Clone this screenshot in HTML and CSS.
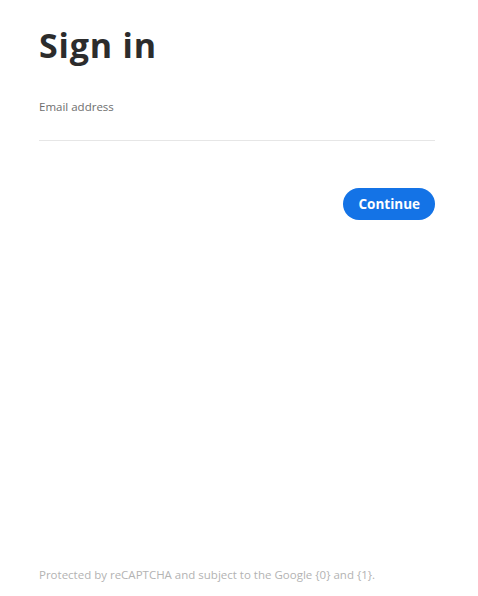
FILE: index.html
```html
<!DOCTYPE html>
<html lang="en">
<head>
<meta charset="utf-8">
<title>Sign in</title>
<link rel="stylesheet" href="styles.css">
</head>
<body>
<div class="page">
  <main class="card">
    <h1 class="title">Sign in</h1>
    <form class="form">
      <label class="field">
        <span class="label">Email address</span>
        <input class="input" type="email">
      </label>
      <div class="actions">
        <button type="button" class="btn">Continue</button>
      </div>
    </form>
  </main>
  <footer class="legal">Protected by reCAPTCHA and subject to the Google {0} and {1}.</footer>
</div>
</body>
</html>
```
FILE: styles.css
```css
* { box-sizing: border-box; }
html, body { margin: 0; padding: 0; background: #fff; }
body {
  font-family: "Open Sans", "Noto Sans", "Liberation Sans", sans-serif;
  color: #2c2c2c;
}
.page {
  height: 596px;
  padding: 0 43px 0 39px;
  display: flex;
  flex-direction: column;
}
.card { flex: 1; }
.title {
  margin: 22px 0 0;
  font-size: 34px;
  line-height: 46px;
  font-weight: 700;
  color: #2c2c2c;
  letter-spacing: 0.8px;
}
.form { margin-top: 31px; }
.field { display: flex; flex-direction: column; }
.label {
  font-size: 11.5px;
  line-height: 16px;
  color: #6e6e6e;
}
.input {
  border: 0;
  border-bottom: 1px solid #e6e6e6;
  height: 18px;
  margin-top: 8px;
  padding: 0;
  outline: none;
  font: inherit;
  background: transparent;
}
.actions {
  display: flex;
  justify-content: flex-end;
  margin-top: 47px;
}
.btn {
  height: 32px;
  padding: 0 15px;
  border: 0;
  border-radius: 16px;
  background: #1473e6;
  color: #fff;
  font-family: inherit;
  font-size: 13.5px;
  font-weight: 700;
  cursor: pointer;
}
.legal {
  font-size: 11.5px;
  line-height: 16px;
  color: #b3b3b3;
  padding-bottom: 13px;
}
```
